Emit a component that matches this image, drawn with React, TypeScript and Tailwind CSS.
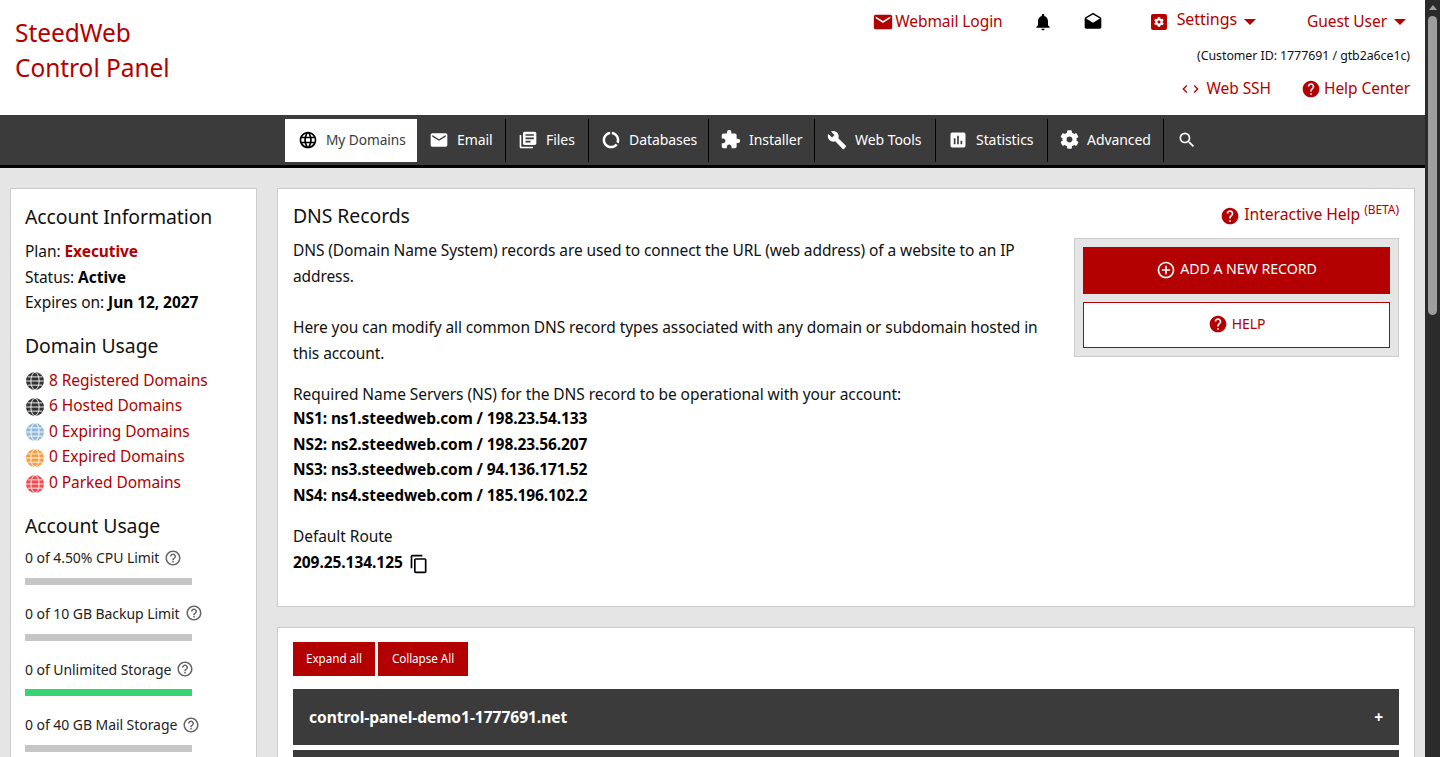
import React from 'react';
import { FaCog } from 'react-icons/fa';
import { MdEmail, MdLibraryBooks, MdDataUsage, MdAssessment, MdAddCircleOutline, MdContentCopy, MdSearch, MdBuild, MdHelp, MdHelpOutline, MdLanguage, MdNotifications, MdDrafts, MdExtension, MdChevronLeft, MdChevronRight } from 'react-icons/md';

const RED = 'text-[#b30000]';

const Globe = ({ color }: { color: string }) => (
  <svg viewBox="0 0 24 24" className="w-[18px] h-[18px] shrink-0 mt-[2px] ml-[1px]" fill="none" stroke="#fff" strokeWidth="1.2">
    <circle cx="12" cy="12" r="12" fill={color} stroke="none" />
    <path d="M0 12h24M2.5 6.5h19M2.5 17.5h19" />
    <ellipse cx="12" cy="12" rx="5.5" ry="11.5" />
  </svg>
);

const NavItem = ({ icon, label, width, last }: { icon: React.ReactNode; label: string; width: string; last?: boolean }) => (
  <div className={`flex items-center gap-[8px] h-[43px] pb-[2px] pl-3 text-[14px] text-white ${width} ${last ? '' : 'border-r border-black'}`}>
    {icon}
    <span>{label}</span>
  </div>
);

const Domain = ({ color, label }: { color: string; label: string }) => (
  <div className={`flex items-center gap-[5px] h-[25.6px] ${RED} text-[15.5px]`}>
    <Globe color={color} />
    <span>{label}</span>
  </div>
);

const Usage = ({ label, green }: { label: string; green?: boolean }) => (
  <div className="h-[55.6px]">
    <div className="flex items-center gap-[5px] h-[22px] text-[14px] text-[#222]">
      <span>{label}</span>
      <MdHelpOutline className="w-[18px] h-[18px] text-[#666]" />
    </div>
    <div className={`mt-[9.3px] h-[7px] w-[167px] ${green ? 'bg-[#36d574]' : 'bg-[#c6c6c6]'}`} />
  </div>
);

const App: React.FC = () => {
  return (
    <div className="flex w-[1440px] h-[757px] overflow-hidden font-['Noto_Sans',sans-serif] tracking-[-0.06px] text-[#111]">
      <div className="w-[1425px] shrink-0 bg-[#e5e5e5] flex flex-col">
        {/* Top header */}
        <header className="h-[115px] bg-white flex justify-between shrink-0">
          <div className={`pl-[15px] pt-[15px] text-[24.5px] leading-[35px] ${RED}`}>
            <div>SteedWeb</div>
            <div>Control Panel</div>
          </div>
          <div className="pr-[15px] flex flex-col items-end">
            <div className="flex items-center h-[44px] text-[15.5px]">
              <span className={`flex items-center gap-[1px] ${RED}`}><MdEmail className="w-[22px] h-[22px]" />Webmail Login</span>
              <MdNotifications className="ml-[30px] w-[20px] h-[20px] text-black" />
              <MdDrafts className="ml-[30px] w-[20px] h-[20px] text-black" />
              <span className={`ml-[48px] flex items-center ${RED}`}>
                <span className="w-[16px] h-[16px] rounded-[2px] bg-[#b30000] flex items-center justify-center"><FaCog className="w-[10px] h-[10px] text-white" /></span>
                <span className="ml-[10px] mb-[6px] text-[16px]">Settings</span>
                <span className="ml-[7px] border-x-[6px] border-x-transparent border-t-[6px] border-t-[#b30000]" />
              </span>
              <span className={`ml-[51px] mr-[4px] flex items-center gap-[7px] ${RED}`}>
                Guest User
                <span className="border-x-[6px] border-x-transparent border-t-[6px] border-t-[#b30000]" />
              </span>
            </div>
            <div className="text-[12.4px] h-[26px] -mt-[1px] flex items-center">(Customer ID: 1777691 / gtb2a6ce1c)</div>
            <div className={`flex items-center h-[38px] mt-[1px] text-[15.5px] ${RED}`}>
              <MdChevronLeft className="w-[16px] h-[18px] -mr-[5px]" />
              <MdChevronRight className="w-[16px] h-[18px] -mr-[2px]" />
              <span className="ml-[5px]">Web SSH</span>
              <MdHelp className="ml-[30px] w-[20px] h-[20px]" />
              <span className="ml-[3px]">Help Center</span>
            </div>
          </div>
        </header>

        {/* Main nav */}
        <nav className="h-[53px] shrink-0 bg-[#3b3b3b] border-b-[3px] border-black flex items-start pt-[4px] pl-[285px]">
          <div className="flex items-center gap-[8px] w-[132px] h-[43px] pb-[1px] pl-[13px] bg-white text-[#3b3b3b] text-[13.7px]">
            <MdLanguage className="w-[20px] h-[20px] text-black" />
            <span>My Domains</span>
          </div>
          <NavItem width="w-[89px]" label="Email" icon={<MdEmail className="w-[20px] h-[20px]" />} />
          <NavItem width="w-[83px]" label="Files" icon={<MdLibraryBooks className="w-[20px] h-[20px]" />} />
          <NavItem width="w-[120px]" label="Databases" icon={<MdDataUsage className="w-[20px] h-[20px]" />} />
          <NavItem width="w-[106px]" label="Installer" icon={<MdExtension className="w-[21px] h-[21px] -ml-[1px]" />} />
          <NavItem width="w-[121px]" label="Web Tools" icon={<MdBuild className="w-[20px] h-[20px]" />} />
          <NavItem width="w-[112px]" label="Statistics" icon={<MdAssessment className="w-[20px] h-[20px]" />} />
          <NavItem width="w-[116px]" label="Advanced" icon={<FaCog className="w-[19px] h-[19px]" />} />
          <div className="h-[43px] pb-[2px] flex items-center pl-[13px] pr-[14px]">
            <MdSearch className="w-[20px] h-[20px] text-white" />
          </div>
        </nav>

        <div className="flex items-start gap-[20px] pl-[10px] pr-[10px] pt-[20px]">
          {/* Sidebar */}
          <aside className="w-[247px] h-[700px] shrink-0 bg-white border border-[#cccccc] pl-[14px] pt-[14px]">
            <h3 className="text-[19.4px] leading-[28px]">Account Information</h3>
            <div className="mt-[8px] text-[15.5px] leading-[25.5px]">
              <div>Plan: <b className={RED}>Executive</b></div>
              <div>Status: <b className="text-black">Active</b></div>
              <div>Expires on: <b className="text-black">Jun 12, 2027</b></div>
            </div>
            <h3 className="mt-[16px] text-[19.4px] leading-[28px]">Domain Usage</h3>
            <div className="mt-[8px]">
              <Domain color="#333333" label="8 Registered Domains" />
              <Domain color="#333333" label="6 Hosted Domains" />
              <Domain color="#93b9dc" label="0 Expiring Domains" />
              <Domain color="#f79c41" label="0 Expired Domains" />
              <Domain color="#f5484f" label="0 Parked Domains" />
            </div>
            <h3 className="mt-[17px] text-[19.4px] leading-[28px]">Account Usage</h3>
            <div className="mt-[6.4px]">
              <Usage label="0 of 4.50% CPU Limit" />
              <Usage label="0 of 10 GB Backup Limit" />
              <Usage green label="0 of Unlimited Storage" />
              <Usage label="0 of 40 GB Mail Storage" />
            </div>
          </aside>

          {/* Content */}
          <main className="flex-1 min-w-0 flex flex-col gap-[20px]">
            <section className="h-[419px] bg-white border border-[#cccccc] pl-[15px] pr-[15px] pt-[13px]">
              <div className="flex justify-between items-start h-[36px]">
                <h2 className="text-[19.4px] leading-[28px]">DNS Records</h2>
                <span className={`flex items-start gap-[4px] mt-[1px] text-[15.7px] ${RED}`}>
                  <MdHelp className="w-[20px] h-[20px] mt-[3px]" />
                  <span>Interactive Help <sup className="text-[12px]">(BETA)</sup></span>
                </span>
              </div>
              <div className="flex justify-between items-start">
                <div className="w-[760px] text-[15.5px] leading-[25.6px]">
                  <p className="tracking-[-0.1px]">DNS (Domain Name System) records are used to connect the URL (web address) of a website to an IP address.</p>
                  <p className="mt-[25.8px] tracking-[-0.1px]">Here you can modify all common DNS record types associated with any domain or subdomain hosted in this account.</p>
                  <p className="mt-[15.9px]">Required Name Servers (NS) for the DNS record to be operational with your account:</p>
                  <div className="font-bold text-black -mt-[1.4px] tracking-[-0.1px]">
                    <div>NS1: ns1.steedweb.com / 198.23.54.133</div>
                    <div>NS2: ns2.steedweb.com / 198.23.56.207</div>
                    <div>NS3: ns3.steedweb.com / 94.136.171.52</div>
                    <div>NS4: ns4.steedweb.com / 185.196.102.2</div>
                  </div>
                  <p className="mt-[15.5px]">Default Route</p>
                  <div className="flex items-center gap-[6px] font-bold text-black">
                    209.25.134.125
                    <MdContentCopy className="w-[20px] h-[20px] mt-[3px] text-black" />
                  </div>
                </div>
                <div className="w-[325px] bg-[#e5e5e5] border border-[#cccccc] p-[8px] flex flex-col gap-[8px]">
                  <div className="h-[47px] pb-[4px] bg-[#b30000] text-white text-[14.2px] flex items-center justify-center gap-[4px]">
                    <MdAddCircleOutline className="w-[20px] h-[20px] mt-[2px]" />
                    ADD A NEW RECORD
                  </div>
                  <div className={`h-[46px] pb-[4px] bg-white border border-[#b30000] text-[14px] flex items-center justify-center gap-[4px] ${RED}`}>
                    <MdHelp className="w-[20px] h-[20px] mt-[2px]" />
                    HELP
                  </div>
                </div>
              </div>
            </section>

            <section className="flex-1 h-[300px] bg-white border border-[#cccccc] px-[15px] pt-[14px]">
              <div className="flex gap-[3px]">
                <button className="h-[34px] w-[82px] bg-[#b30000] text-white text-[11.7px]">Expand all</button>
                <button className="h-[34px] w-[90px] bg-[#b30000] text-white text-[11.7px]">Collapse All</button>
              </div>
              <div className="mt-[13px] h-[56px] pt-[2px] bg-[#3b3b3b] text-white font-bold text-[15.6px] flex items-center justify-between pl-[16px] pr-[16px]">
                <span>control-panel-demo1-1777691.net</span>
                <span>+</span>
              </div>
              <div className="mt-[5px] h-[56px] bg-[#3b3b3b]" />
            </section>
          </main>
        </div>
      </div>

      {/* Scrollbar */}
      <div className="w-[15px] shrink-0 bg-[#2b2b2b] flex flex-col items-center pt-[5px]">
        <div className="border-x-[4px] border-x-transparent border-b-[5px] border-b-[#a0a0a0]" />
        <div className="mt-[6px] w-[9px] h-[299px] rounded-full bg-[#9e9e9e]" />
      </div>
    </div>
  );
};

export default App;
